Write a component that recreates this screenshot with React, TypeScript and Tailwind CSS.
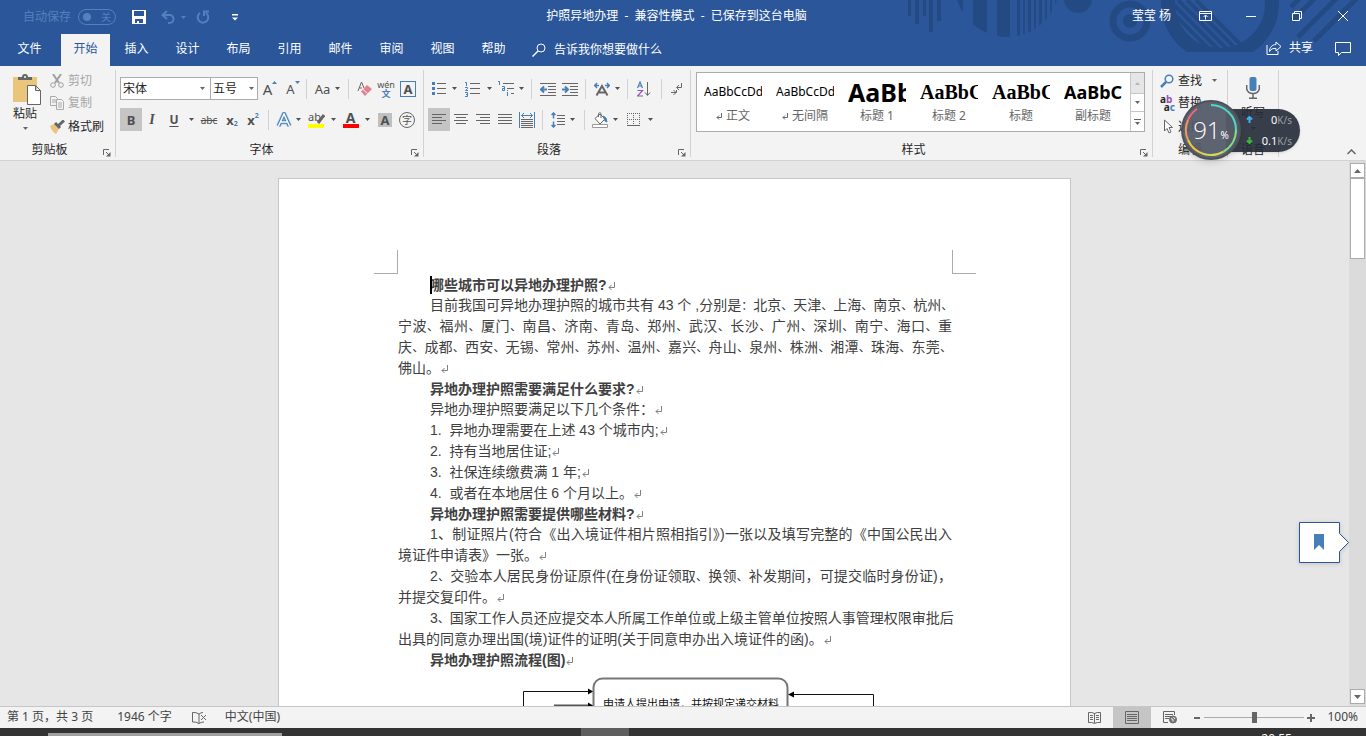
import React from 'react';

type IconProps = {
  w?: number;
  h?: number;
  className?: string;
  children: React.ReactNode;
};

const Icon = ({ w = 16, h = 16, className = '', children }: IconProps) => (
  <svg
    width={w}
    height={h}
    viewBox={`0 0 ${w} ${h}`}
    fill="none"
    stroke="#666"
    className={`shrink-0 ${className}`}
    aria-hidden="true"
  >
    {children}
  </svg>
);

const Caret = ({ className = '' }: { className?: string }) => (
  <Icon w={5} h={3} className={className}>
    <path d="M0 0h5L2.5 3z" fill="currentColor" stroke="none" />
  </Icon>
);

const Tool = ({
  label,
  className,
  children,
}: {
  label: string;
  className: string;
  children: React.ReactNode;
}) => (
  <button
    aria-label={label}
    className={`flex h-[23px] shrink-0 items-center justify-center text-[#505050] ${className}`}
  >
    {children}
  </button>
);

const Drop = ({ className = 'w-[9px]' }: { className?: string }) => (
  <Tool label="更多" className={className}>
    <Caret />
  </Tool>
);

const Sep = ({ className = 'mx-1' }: { className?: string }) => (
  <span className={`h-5 w-px shrink-0 bg-[#d2d2d2] ${className}`} />
);

const Group = ({
  label,
  launcher = false,
  className,
  children,
}: {
  label: string;
  launcher?: boolean;
  className: string;
  children: React.ReactNode;
}) => (
  <section className={`flex h-[87px] shrink-0 flex-col border-r border-[#d2d2d2] ${className}`}>
    <div className="h-[72px]">{children}</div>
    <div className={`relative flex h-[15px] items-center justify-center ${launcher ? 'pr-4' : ''}`}>
      <span>{label}</span>
      {launcher && (
        <button aria-label={`${label}设置`} className="absolute right-1 bottom-0">
          <Icon w={8} h={8}>
            <path d="M.5 6V.5H6M3 3l3 3" />
            <path d="M7.500 3v4.500H3z" fill="#666" stroke="none" />
          </Icon>
        </button>
      )}
    </div>
  </section>
);

const TitlePattern = () => (
  <svg
    width="460"
    height="66"
    viewBox="906 0 460 66"
    className="pointer-events-none absolute top-0 right-0"
    fill="#244a83"
    aria-hidden="true"
  >
    <defs>
      <clipPath id="ball">
        <circle cx="1007" cy="-15" r="52" />
      </clipPath>
      <clipPath id="hoop">
        <rect x="1150" y="0" width="140" height="52" />
      </clipPath>
      <clipPath id="hoopInner">
        <circle cx="1220" cy="3" r="46" />
      </clipPath>
    </defs>
    <path d="M908 0h3v16h-3zM915 0h4v24h-4zM923 0h3v16h-3zM929 0h4v32h-4zM937 0h4v21h-4z" />
    <g clipPath="url(#ball)">
      <path d="M950 0h13v40h-13zM973 0h14v40h-14zM997 0h13v40h-13zM1017 0h3v40h-3zM1023 0h2v40h-2zM1028 0h3v40h-3zM1034 0h2v40h-2zM1039 0h3v40h-3zM1045 0h2v40h-2zM1050 0h2v40h-2zM1055 0h2v40h-2z" />
    </g>
    <circle cx="1078" cy="-1" r="14" />
    <circle cx="1130" cy="21" r="17" fill="none" stroke="#244a83" strokeWidth="7" />
    <circle cx="1130" cy="21" r="7" />
    <g clipPath="url(#hoop)">
      <circle cx="1220" cy="3" r="52" fill="none" stroke="#244a83" strokeWidth="14" />
      <g clipPath="url(#hoopInner)" stroke="#244a83" strokeWidth="4">
        <path d="M1160 0l54 54M1169 0l54 54M1178 0l54 54M1187 0l54 54M1196 0l54 54" />
      </g>
    </g>
    <g stroke="#244a83" strokeWidth="5">
      <path d="M1291 7l12-12M1292 21l26-26M1298 37l42-42M1314 41l46-46" />
    </g>
  </svg>
);

const TitleBar = () => (
  <div className="relative flex h-[34px] items-center pb-0.5 text-white">
    <div className="flex w-[240px] shrink-0 items-center pt-0.5 pl-[23px]">
      <span className="text-[#5580bd]">自动保存</span>
      <button
        aria-label="自动保存 关"
        className="ml-[7px] flex h-4 w-[38px] items-center justify-between rounded-full border border-[#5580bd] px-1 text-[10px] text-[#5580bd]"
      >
        <span className="size-2 rounded-full bg-[#5580bd]" />
        <span>关</span>
      </button>
      <button aria-label="保存" className="ml-4">
        <Icon w={14} h={14}>
          <path
            fillRule="evenodd"
            d="M0 0h14v14H0zM2 1v5h10V1zM3 9v4h2v-2h2v2h4V9z"
            fill="#fff"
            stroke="none"
          />
        </Icon>
      </button>
      <button aria-label="撤消" className="ml-[15px] text-[#5580bd]">
        <Icon w={14} h={14}>
          <path d="M6 1L1.500 5 6 9M2 5h6.500a4 4 0 0 1 0 8H7" stroke="currentColor" strokeWidth="2" />
        </Icon>
      </button>
      <Caret className="ml-1.5 text-[#5580bd]" />
      <button aria-label="重做" className="ml-2.5 text-[#5580bd]">
        <Icon w={14} h={14}>
          <path d="M4 3a5.300 5.300 0 1 0 6 0M8 6V1.500h5" stroke="currentColor" strokeWidth="2" />
        </Icon>
      </button>
      <button aria-label="自定义快速访问工具栏" className="ml-[22px]">
        <Icon w={6} h={7}>
          <path d="M0 0h6v1.500H0zM0 3.500h6L3 6.500z" fill="#fff" stroke="none" />
        </Icon>
      </button>
    </div>
    <h1 className="flex-1 text-center whitespace-pre">
      护照异地办理  -  兼容性模式  -  已保存到这台电脑
    </h1>
    <div className="flex w-[253px] shrink-0 items-center justify-end">
      <span className="pr-[11px]">莹莹 杨</span>
      <button aria-label="功能区显示选项" className="flex w-[46px] justify-center">
        <Icon w={13} h={10}>
          <path d="M.5.5h12v9H.5zM.5 2.500h12M6.500 8.500v-4M4.500 6l2-2 2 2" stroke="#fff" />
        </Icon>
      </button>
      <button aria-label="最小化" className="flex w-[46px] justify-center">
        <Icon w={10} h={10}>
          <path d="M0 5.500h10" stroke="#fff" />
        </Icon>
      </button>
      <button aria-label="向下还原" className="flex w-[46px] justify-center">
        <Icon w={10} h={10}>
          <path d="M.5 2.500h7v7h-7zM2.500 2.500v-2h7v7h-2" stroke="#fff" />
        </Icon>
      </button>
      <button aria-label="关闭" className="flex w-[46px] justify-center">
        <Icon w={10} h={10}>
          <path d="M0 0l10 10M10 0L0 10" stroke="#fff" />
        </Icon>
      </button>
    </div>
  </div>
);

const tabs = ['开始', '插入', '设计', '布局', '引用', '邮件', '审阅', '视图', '帮助'];

const TabBar = () => (
  <nav className="relative flex h-8 items-center text-white">
    <button className="h-8 w-[59px] pb-0.5">文件</button>
    {tabs.map((tab, i) => (
      <button
        key={tab}
        className={`mx-px h-8 w-[49px] pb-0.5 ${i === 0 ? 'ml-0.5 bg-[#f3f3f3] text-[#2b579a]' : ''}`}
      >
        {tab}
      </button>
    ))}
    <button className="ml-[13px] flex items-center gap-2">
      <Icon w={14} h={14}>
        <circle cx="9" cy="5" r="4" stroke="#fff" />
        <path d="M6 8l-5.500 5.500" stroke="#fff" strokeWidth="1.500" />
      </Icon>
      告诉我你想要做什么
    </button>
    <button className="ml-auto flex items-center gap-[7px] pb-1">
      <Icon w={16} h={14}>
        <path d="M1 4v9.500h11V10" stroke="#fff" />
        <path d="M10 1l5 4.500L10 10V7.500C7 7 5 8 3.500 10.500 3.500 6.500 6 3.700 10 3.500z" stroke="#fff" />
      </Icon>
      共享
    </button>
    <button aria-label="批注" className="mr-[15px] ml-[22px] pb-1">
      <Icon w={16} h={15}>
        <path d="M.5 1.500h15v10H6.500l-3 3v-3h-3z" stroke="#fff" />
      </Icon>
    </button>
  </nav>
);

const ClipboardGroup = () => (
  <Group label="剪贴板" launcher className="w-[116px]">
    <div className="flex">
      <button className="flex w-[50px] flex-col items-center pt-1">
        <Icon w={28} h={32} className="ml-1">
          <path d="M0 3h24v25H0z" fill="#ecc57c" stroke="none" />
          <path d="M5 6V3h4a3 3 0 0 1 6 0h4v3z" fill="#666" stroke="none" />
          <circle cx="12" cy="3" r="1" fill="#fff" stroke="none" />
          <path d="M14.500 11.500h8l5 5v14h-13zM22.500 11.500v5h5" fill="#fff" />
        </Icon>
        <span className="leading-[15px]">粘贴</span>
        <Caret className="mt-1.5 text-[#666]" />
      </button>
      <div className="flex flex-col text-[#a6a6a6]">
        <button className="flex h-[21px] items-center gap-1">
          <Icon w={14} h={14}>
            <path d="M3 0l6 9M11 0L5 9" stroke="#a0a0a0" strokeWidth="2" />
            <circle cx="3" cy="11" r="2.300" stroke="#a0a0a0" />
            <circle cx="11" cy="11" r="2.300" stroke="#a0a0a0" />
          </Icon>
          剪切
        </button>
        <button className="flex h-6 items-center gap-1">
          <Icon w={14} h={14}>
            <path d="M.5.500h5l2 2v7h-7zM2 4h4M2 6h4" stroke="#aaa" />
            <path d="M6.500 3.500h5l2 2v8h-7zM8 7h4M8 9h4M8 11h4" stroke="#aaa" fill="#f3f3f3" />
          </Icon>
          复制
        </button>
        <button className="flex h-[23px] items-center gap-[3px] text-[#262626]">
          <Icon w={15} h={14}>
            <path d="M0 6l4-2 5 5-3 5c-2-1-5-4-6-8z" fill="#ecc57c" stroke="none" />
            <path d="M5 3l5 5M8.500 5.500L14 .5" strokeWidth="3" />
          </Icon>
          格式刷
        </button>
      </div>
    </div>
  </Group>
);

const FontGroup = () => (
  <Group label="字体" launcher className="w-[308px]">
    <div className="flex flex-col gap-2 pt-[7px] pl-1">
      <div className="flex items-center">
        <label className="relative">
          <select
            aria-label="字体"
            className="block h-[23px] w-[91px] appearance-none border border-[#ababab] bg-white px-0.5"
          >
            <option>宋体</option>
          </select>
          <Caret className="pointer-events-none absolute top-2.5 right-1.5 text-[#666]" />
        </label>
        <label className="relative -ml-px">
          <select
            aria-label="字号"
            className="block h-[23px] w-[48px] appearance-none border border-[#ababab] bg-white px-0.5"
          >
            <option>五号</option>
          </select>
          <Caret className="pointer-events-none absolute top-2.5 right-1 text-[#666]" />
        </label>
        <Tool label="增大字号" className="w-6">
          <span className="text-[15px]">A</span>
          <Icon w={5} h={3} className="-mt-3">
            <path d="M0 3h5L2.500 0z" fill="#4780b8" stroke="none" />
          </Icon>
        </Tool>
        <Tool label="减小字号" className="w-[22px]">
          <span className="text-[13px]">A</span>
          <Icon w={5} h={3} className="-mt-3">
            <path d="M0 0h5L2.500 3z" fill="#4780b8" stroke="none" />
          </Icon>
        </Tool>
        <Sep className="mr-1 ml-0.5" />
        <Tool label="更改大小写" className="w-[23px]">
          <span className="text-[13px]">Aa</span>
        </Tool>
        <Drop className="w-1.5" />
        <Sep className="mr-1 ml-2" />
        <Tool label="清除所有格式" className="w-[22px]">
          <Icon w={15} h={15}>
            <path d="M1 10L4.500 1 7 7M2.500 7H5" />
            <path d="M10 4l5 4-7 7-4-4.500z" fill="#e6808f" stroke="none" />
            <path d="M6 8.500l4.500 4" stroke="#f3f3f3" />
          </Icon>
        </Tool>
        <Tool label="拼音指南" className="w-[22px] flex-col">
          <span className="text-[9px] leading-[9px]">wén</span>
          <span className="text-[9px] leading-[9px] font-bold text-[#4780b8]">文</span>
        </Tool>
        <Tool label="字符边框" className="w-[22px]">
          <span className="flex size-4 items-center justify-center border border-[#4780b8] text-[13px] font-bold">
            A
          </span>
        </Tool>
      </div>
      <div className="flex items-center">
        <Tool label="加粗" className="w-[22px] bg-[#c5c5c5] text-[13px] font-bold">
          B
        </Tool>
        <Tool label="倾斜" className="w-5 font-['Liberation_Serif',serif] text-[14px] font-bold italic">
          I
        </Tool>
        <Tool label="下划线" className="w-6 text-[12px] font-bold underline underline-offset-2">
          U
        </Tool>
        <Drop className="w-2.5" />
        <Tool label="删除线" className="w-[26px] text-[10px] line-through">
          abc
        </Tool>
        <Tool label="下标" className="w-5 text-[13px] font-bold">
          x<span className="mt-2 text-[7px] text-[#4780b8]">2</span>
        </Tool>
        <Tool label="上标" className="w-[22px] text-[13px] font-bold">
          x<span className="mb-2 text-[7px] text-[#4780b8]">2</span>
        </Tool>
        <Sep />
        <Tool label="文本效果" className="w-[21px]">
          <Icon w={16} h={16}>
            <path d="M2.500 14L8 2l5.500 12M4.500 10h7" stroke="#a9c8e8" strokeWidth="5" />
            <path d="M2.500 14L8 2l5.500 12M4.500 10h7" stroke="#4780b8" strokeWidth="3.500" />
            <path d="M2.500 14L8 2l5.500 12M4.500 10h7" stroke="#fff" strokeWidth="1.500" />
          </Icon>
        </Tool>
        <Drop />
        <Tool label="突出显示" className="w-[26px]">
          <span className="relative h-4 w-4 border-b-4 border-[#ff0] text-left text-[11px] leading-[10px]">
            ab
            <Icon w={8} h={10} className="absolute top-0.5 -right-px">
              <path d="M1 9l6-8" strokeWidth="3" />
            </Icon>
          </span>
        </Tool>
        <Drop />
        <Tool label="字体颜色" className="w-[25px]">
          <span className="h-4 w-4 border-b-4 border-[#f00] text-center text-[14px] leading-[12px] font-bold">
            A
          </span>
        </Tool>
        <Drop />
        <Tool label="字符底纹" className="w-[26px]">
          <span className="flex size-3.5 items-center justify-center bg-[#bfbfbf] text-[13px] font-bold">
            A
          </span>
        </Tool>
        <Tool label="带圈字符" className="w-[18px]">
          <span className="flex size-4 shrink-0 items-center justify-center rounded-full border border-[#666] text-[10px]">
            字
          </span>
        </Tool>
      </div>
    </div>
  </Group>
);

const ParagraphGroup = () => (
  <Group label="段落" launcher className="w-[267px]">
    <div className="flex flex-col gap-2 pt-[7px] pl-1">
      <div className="flex items-center">
        <Tool label="项目符号" className="w-[22px]">
          <Icon w={14} h={15}>
            <path d="M5 2.500h9M5 7.500h9M5 12.500h9" />
            <path d="M0 1h3v3H0zM0 6h3v3H0zM0 11h3v3H0z" fill="#4780b8" stroke="none" />
          </Icon>
        </Tool>
        <Drop />
        <Tool label="编号" className="w-[27px]">
          <Icon w={15} h={16}>
            <path d="M5 2.500h10M5 7.500h10M5 12.500h10" />
            <path d="M0 1.500h1.500V5M0 6.500h2.500v1L.5 9.500h2.500M0 11.500h2.500v4H0M1 13.500h1.500" stroke="#4780b8" />
          </Icon>
        </Tool>
        <Drop className="w-1.5" />
        <Tool label="多级列表" className="w-[27px]">
          <Icon w={16} h={16}>
            <path d="M5 2.500h11M9 7.500h7M13 12.500h3" />
            <path d="M0 .5h1.500V4M4 5.500h2.500v4H4.500v-2H6M9.500 11v4M9.500 9v1" stroke="#4780b8" />
          </Icon>
        </Tool>
        <Drop className="w-1" />
        <Sep className="mr-[5px] ml-2" />
        <Tool label="减少缩进量" className="w-[22px]">
          <Icon>
            <path d="M0 2.500h16M8 5.500h8M8 8.500h8M8 11.500h8M0 14.500h16" />
            <path d="M1 8.500h6M4 5.500l-3 3 3 3" stroke="#4780b8" strokeWidth="2" />
          </Icon>
        </Tool>
        <Tool label="增加缩进量" className="w-[22px]">
          <Icon>
            <path d="M0 2.500h16M8 5.500h8M8 8.500h8M8 11.500h8M0 14.500h16" />
            <path d="M0 8.500h6M3 5.500l3 3-3 3" stroke="#4780b8" strokeWidth="2" />
          </Icon>
        </Tool>
        <Sep />
        <Tool label="中文版式" className="w-6">
          <Icon>
            <path d="M2.500 14.500L8 5l5.500 9.500M5 11.500h6" strokeWidth="2" />
            <path d="M0 4.500h5M3 2L.7 4.500 3 7M11 4.500h5M13 2l2.300 2.500L13 7" stroke="#4780b8" strokeWidth="1.500" />
          </Icon>
        </Tool>
        <Drop className="w-1.5" />
        <Sep className="mr-1 ml-[7px]" />
        <Tool label="排序" className="w-6">
          <Icon w={14} h={16}>
            <path d="M.5 7L3 1l2.500 6M1.500 5h3" stroke="#4780b8" strokeWidth="1.200" />
            <path d="M.5 9.500h5l-5 5.500h5.500" stroke="#9254b5" strokeWidth="1.200" />
            <path d="M10.500 1v13M8 11.500l2.500 3 2.500-3" />
          </Icon>
        </Tool>
        <Sep className="mr-1 ml-[5px]" />
        <Tool label="显示编辑标记" className="w-[22px]">
          <Icon w={12} h={14}>
            <path d="M10.500 1v4.500H6M8 3L5.500 5.500 8 8M5.500 8v2.500H0M2.500 8L5 10.500 2.500 13" />
          </Icon>
        </Tool>
      </div>
      <div className="flex items-center">
        <Tool label="左对齐" className="w-[22px] bg-[#c5c5c5]">
          <Icon w={14} h={13}>
            <path d="M0 1.500h14M0 4.500h10M0 7.500h14M0 10.500h10" />
          </Icon>
        </Tool>
        <Tool label="居中" className="w-[22px]">
          <Icon w={14} h={13}>
            <path d="M0 1.500h14M2 4.500h10M0 7.500h14M2 10.500h10" />
          </Icon>
        </Tool>
        <Tool label="右对齐" className="w-[22px]">
          <Icon w={14} h={13}>
            <path d="M0 1.500h14M4 4.500h10M0 7.500h14M4 10.500h10" />
          </Icon>
        </Tool>
        <Tool label="两端对齐" className="w-[22px]">
          <Icon w={14} h={13}>
            <path d="M0 1.500h14M0 4.500h14M0 7.500h14M0 10.500h14" />
          </Icon>
        </Tool>
        <Tool label="分散对齐" className="w-[22px]">
          <Icon>
            <path d="M2 7.500h12M2 9.500h12M2 11.500h12M2 13.500h12M2 15.500h12" />
            <path d="M.5 0v16M15.500 0v16M2.500 3.500h11M5 1L2.500 3.500 5 6M11 1l2.500 2.500L11 6" stroke="#4780b8" />
          </Icon>
        </Tool>
        <Sep />
        <Tool label="行和段落间距" className="w-[22px]">
          <Icon w={14} h={16}>
            <path d="M6 3.500h8M6 6.500h8M6 9.500h8M6 12.500h8" />
            <path d="M2.500 1v5.500M.5 3l2-2 2 2M2.500 9.500V15M.5 13l2 2 2-2" stroke="#4780b8" strokeWidth="1.500" />
          </Icon>
        </Tool>
        <Drop className="w-1.5" />
        <Sep className="mr-1 ml-[9px]" />
        <Tool label="底纹" className="w-[22px]">
          <Icon>
            <path d="M3 6.500l5-4.500 5 5-5 5zM6.500 5V1.500q1.500-2 2.500 0V6" fill="#fff" />
            <path d="M11 4q4 1 4 6l-2-1z" fill="#4780b8" stroke="#4780b8" />
            <path d="M.5 12.500h15v3H.5z" fill="#fff" stroke="#999" />
          </Icon>
        </Tool>
        <Drop />
        <Tool label="边框" className="w-[26px]">
          <Icon w={13} h={13}>
            <path d="M0 .5h13M0 6.500h13M.5 0v12M6.500 0v12M12.500 0v12" strokeDasharray="1 1" />
            <path d="M0 12.500h13" />
          </Icon>
        </Tool>
        <Drop />
      </div>
    </div>
  </Group>
);

const styles = [
  { name: '正文', sample: 'AaBbCcDd', look: 'text-[12px]', mark: true },
  { name: '无间隔', sample: 'AaBbCcDd', look: 'text-[12px]', mark: true },
  { name: '标题 1', sample: 'AaBb', look: 'text-[25px] font-bold', mark: false },
  { name: '标题 2', sample: 'AaBbC', look: "font-['Liberation_Serif',serif] text-[20px] font-bold", mark: false },
  { name: '标题', sample: 'AaBbC', look: "font-['Liberation_Serif',serif] text-[20px] font-bold", mark: false },
  { name: '副标题', sample: 'AaBbCc', look: 'text-[18px] font-bold', mark: false },
];

const StylesGroup = () => (
  <Group label="样式" launcher className="w-[462px]">
    <div className="pt-0.5 pl-[5px]">
      <div className="flex h-[60px] w-[449px] border border-[#ababab] bg-white">
        <div className="flex flex-1">
          {styles.map((s) => (
            <button key={s.name} className="flex w-[72px] flex-col px-[7px] pt-[3px]">
              <span
                className={`block h-8 w-[58px] overflow-hidden text-left leading-8 whitespace-nowrap text-black ${s.look}`}
              >
                {s.sample}
              </span>
              <span className="flex w-full items-center justify-center gap-1 text-[#666]">
                {s.mark && (
                  <Icon w={6} h={7}>
                    <path d="M5.500 0v4.500H1M3 2.500L1 4.500l2 2" />
                  </Icon>
                )}
                {s.name}
              </span>
            </button>
          ))}
        </div>
        <div className="flex w-[14px] flex-col border-l border-[#c6c6c6]">
          <button aria-label="上一行" className="flex h-5 items-center justify-center bg-[#e6e6e6] text-[#b5b5b5]">
            <Caret className="rotate-180" />
          </button>
          <button
            aria-label="下一行"
            className="flex h-[19px] items-center justify-center border-y border-[#c6c6c6] text-[#666]"
          >
            <Caret />
          </button>
          <button
            aria-label="其他样式"
            className="flex flex-1 flex-col items-center justify-center gap-0.5 text-[#666]"
          >
            <span className="h-px w-[7px] bg-[#666]" />
            <Caret />
          </button>
        </div>
      </div>
    </div>
  </Group>
);

const EditGroups = () => (
  <>
    <Group label="编辑" className="w-[75px]">
      <div className="flex flex-col pl-[7px]">
        <button className="flex h-[21px] items-center gap-1">
          <Icon w={14} h={14}>
            <circle cx="9" cy="5" r="3.800" stroke="#4780b8" strokeWidth="1.500" />
            <path d="M6 8l-5 5" stroke="#4780b8" strokeWidth="2.500" />
          </Icon>
          查找
          <Caret className="ml-1.5 text-[#666]" />
        </button>
        <button className="flex h-6 items-center gap-[3px]">
          <span className="flex w-[15px] flex-col text-[10px] leading-[8px] font-bold">
            <span className="text-left">
              a<span className="text-[#9254b5]">b</span>
            </span>
            <span className="text-right">
              a<span className="text-[#4780b8]">c</span>
            </span>
          </span>
          替换
        </button>
        <button className="flex h-[23px] items-center gap-1">
          <Icon w={14} h={15}>
            <path d="M4.500 1v11l2.500-2.500 2 4.500 2-1-2-4.500h3.500z" fill="#fff" />
          </Icon>
          选择
          <Caret className="ml-1.5 text-[#666]" />
        </button>
      </div>
    </Group>
    <Group label="语音" className="w-[51px]">
      <button className="flex w-full flex-col items-center pt-[7px]">
        <Icon w={14} h={22}>
          <rect x="3.500" y="0" width="7" height="14" rx="2" fill="#4780b8" stroke="none" />
          <path d="M.7 8v4q1 4.500 6.300 4.500t6.300-4.500V8M7 17v4M3 21.300h8" strokeWidth="1.500" />
        </Icon>
        <span className="mt-1.5">听写</span>
        <Caret className="mt-1.5 text-[#666]" />
      </button>
    </Group>
  </>
);

const NetMonitor = () => (
  <aside className="absolute top-[100px] right-[66px] flex h-[60px] w-[119px] items-center">
    <div className="ml-auto flex h-[43px] w-[74px] flex-col justify-center rounded-r-full bg-[#242a36]/90 pr-2 pl-5 text-white shadow">
      <div className="flex h-[21px] items-center text-[11px]">
        <Icon w={7} h={7}>
          <path d="M3.500 7V1M1 3.500L3.500 1 6 3.500" stroke="#3fb0f0" strokeWidth="2" />
        </Icon>
        <span className="ml-auto">0</span>
        <span className="text-[10px] text-[#9a9da5]">K/s</span>
      </div>
      <div className="flex h-[21px] items-center text-[11px]">
        <Icon w={7} h={7}>
          <path d="M3.500 0v6M1 3.500L3.500 6 6 3.500" stroke="#38b838" strokeWidth="2" />
        </Icon>
        <span className="ml-auto">0.1</span>
        <span className="text-[10px] text-[#9a9da5]">K/s</span>
      </div>
    </div>
    <div className="absolute left-0 flex size-[60px] items-center justify-center rounded-full border-2 border-[#4d5159] bg-[#555b69]/95 text-white shadow-md">
      <svg width="56" height="56" viewBox="0 0 56 56" fill="none" strokeWidth="2" className="absolute">
        <path d="M28 3a25 25 0 0 1 25 25" stroke="#4fd8c4" />
        <path d="M53 28a25 25 0 0 1-12.500 21.600" stroke="#83dd84" />
        <path d="M40.500 49.600A25 25 0 0 1 20 51.700" stroke="#cfdc58" />
        <path d="M20 51.700A25 25 0 0 1 5 38" stroke="#efc83c" />
        <path d="M5 38A25 25 0 0 1 5 18" stroke="#f0985a" />
        <path d="M5 18A25 25 0 0 1 14 7" stroke="#ef6676" />
      </svg>
      <span className="font-['Open_Sans',sans-serif] text-[24px] leading-none font-light">91</span>
      <span className="mt-2.5 text-[10px] leading-none">%</span>
    </div>
  </aside>
);

const Return = () => (
  <Icon w={8} h={8} className="ml-px inline-block align-baseline">
    <path d="M6.500 0v5.500H1M3.500 3L1 5.500 3.500 8" stroke="#808080" />
  </Icon>
);

type Block = { heading?: boolean; tight?: boolean; lines: string[] };

const blocks: Block[] = [
  { heading: true, lines: ['哪些城市可以异地办理护照?'] },
  {
    tight: true,
    lines: [
      '目前我国可异地办理护照的城市共有 43 个 ,分别是：北京、天津、上海、南京、杭州、',
      '宁波、福州、厦门、南昌、济南、青岛、郑州、武汉、长沙、广州、深圳、南宁、海口、重',
      '庆、成都、西安、无锡、常州、苏州、温州、嘉兴、舟山、泉州、株洲、湘潭、珠海、东莞、',
      '佛山。',
    ],
  },
  { heading: true, lines: ['异地办理护照需要满足什么要求?'] },
  { lines: ['异地办理护照要满足以下几个条件：'] },
  { lines: ['1.  异地办理需要在上述 43 个城市内;'] },
  { lines: ['2.  持有当地居住证;'] },
  { lines: ['3.  社保连续缴费满 1 年;'] },
  { lines: ['4.  或者在本地居住 6 个月以上。'] },
  { heading: true, lines: ['异地办理护照需要提供哪些材料?'] },
  {
    lines: [
      '1、制证照片(符合《出入境证件相片照相指引》)一张以及填写完整的《中国公民出入',
      '境证件申请表》一张。',
    ],
  },
  {
    tight: true,
    lines: [
      '2、交验本人居民身份证原件(在身份证领取、换领、补发期间，可提交临时身份证)，',
      '并提交复印件。',
    ],
  },
  {
    tight: true,
    lines: [
      '3、国家工作人员还应提交本人所属工作单位或上级主管单位按照人事管理权限审批后',
      '出具的同意办理出国(境)证件的证明(关于同意申办出入境证件的函)。',
    ],
  },
  { heading: true, lines: ['异地办理护照流程(图)'] },
];

const Line = ({ text, tight }: { text: string; tight?: boolean }) =>
  tight ? (
    <>
      {text.split(/([、：])/).map((part, i) =>
        i % 2 ? (
          <span key={i} className="text-[12px] leading-none">
            {part}
          </span>
        ) : (
          part
        ),
      )}
    </>
  ) : (
    <>{text}</>
  );

const FlowChart = () => (
  <svg width="360" height="60" viewBox="518 670 360 60" className="ml-[120px] block" fill="none">
    <rect x="593.500" y="678.500" width="194" height="60" rx="9" stroke="#777" strokeWidth="2" />
    <path d="M523.500 730v-38.500H588M873.500 730v-35.500H793" stroke="#111" />
    <path d="M554 705.500h34" stroke="#555" strokeWidth="2" />
    <path d="M593 691.500l-5-3v6zM593 705.500l-5-3v6zM788 694.500l6-3v6z" fill="#000" />
    <text x="603" y="708" fontSize="11" fill="#111">
      申请人提出申请，并按规定递交材料
    </text>
  </svg>
);

const Page = () => (
  <article className="mx-auto mt-[17px] h-[900px] w-[793px] border border-[#c6c6c6] bg-white pt-[71px] font-['Liberation_Sans','Noto_Sans_CJK_SC',sans-serif] text-[14px] text-[#404040]">
    <div className="mb-px flex justify-between pr-[94px] pl-[95px]">
      <span className="size-6 border-r border-b border-[#ababab]" />
      <span className="size-6 border-b border-l border-[#ababab]" />
    </div>
    <div className="mr-[118px] ml-[119px]">
      {blocks.map((block, i) => {
        const last = block.lines.length - 1;
        const Tag = block.heading ? 'h2' : 'p';
        return (
          <Tag
            key={i}
            className={block.heading ? 'indent-8 leading-[20px] font-bold' : 'indent-8 leading-[21px]'}
          >
            {block.lines.map((line, n) => (
              <span
                key={n}
                className={`block ${n > 0 ? 'indent-0' : ''} ${
                  n < last ? 'whitespace-nowrap [text-align-last:justify]' : 'whitespace-pre'
                } ${i === 0 ? 'relative' : ''}`}
              >
                {i === 0 && <span className="absolute top-px left-8 h-[18px] w-0.5 bg-black" />}
                <Line text={line} tight={block.tight} />
                {n === last && <Return />}
              </span>
            ))}
          </Tag>
        );
      })}
      <FlowChart />
    </div>
  </article>
);

const ScrollBar = () => (
  <div className="flex w-[17px] shrink-0 flex-col items-center bg-[#dbdbdb] py-0.5">
    <button
      aria-label="向上滚动"
      className="flex h-[15px] w-[15px] items-center justify-center border border-[#ababab] bg-white text-[#666]"
    >
      <Icon w={7} h={4}>
        <path d="M0 4h7L3.500 0z" fill="#666" stroke="none" />
      </Icon>
    </button>
    <div className="h-[81px] w-[15px] border border-[#ababab] bg-white" />
    <button
      aria-label="向下滚动"
      className="mt-auto flex h-[15px] w-[15px] items-center justify-center border border-[#ababab] bg-white text-[#666]"
    >
      <Icon w={7} h={4}>
        <path d="M0 0h7L3.500 4z" fill="#666" stroke="none" />
      </Icon>
    </button>
  </div>
);

const StatusBar = () => (
  <footer className="flex h-[22px] shrink-0 items-center border-t border-[#c6c6c6] bg-[#f3f3f3] text-[#444]">
    <span className="ml-[7px] pb-0.5">第 1 页，共 3 页</span>
    <span className="ml-6 pb-0.5">1946 个字</span>
    <button aria-label="校对" className="ml-5">
      <Icon w={15} h={12}>
        <path d="M7 2Q4 0 .5.500v9.500Q4 9.500 7 11.500zM7 2q2-1.500 4-1.500M7 11.500q2-1.500 5-1.500" />
        <path d="M9 3l5 5M14 3L9 8" />
      </Icon>
    </button>
    <button className="ml-[18px] pb-0.5">中文(中国)</button>
    <div className="ml-auto flex h-full items-center">
      <button aria-label="阅读视图" className="flex h-full w-[38px] items-center justify-center">
        <Icon w={13} h={12}>
          <path d="M6.500 1.500Q4 0 .5.500v10q3.500-.5 6 1 2.500-1.500 6-1V.5q-3.500-.5-6 1zM6.500 1v10M2 3.500h3M2 5.500h3M2 7.500h3M8 3.500h3M8 5.500h3M8 7.500h3" />
        </Icon>
      </button>
      <button aria-label="页面视图" className="flex h-full w-[38px] items-center justify-center bg-[#c5c5c5]">
        <Icon w={14} h={13}>
          <path d="M.5.500h13v12H.5zM2 3.500h10M2 5.500h10M2 7.500h10M2 9.500h10" />
        </Icon>
      </button>
      <button aria-label="Web 版式视图" className="flex h-full w-[38px] items-center justify-center">
        <Icon w={14} h={13}>
          <path d="M11.500 4V.5H.5v11H5M2 3.500h8M2 5.500h6M2 7.500h4" />
          <circle cx="10" cy="8.500" r="3.500" fill="#777" />
          <path d="M8 7.500l2 1v2M10.500 6l1.500 2" stroke="#f3f3f3" />
        </Icon>
      </button>
      <button aria-label="缩小" className="ml-1">
        <Icon w={8} h={8}>
          <path d="M1 4h6" strokeWidth="2" />
        </Icon>
      </button>
      <input
        type="range"
        aria-label="显示比例"
        min={0}
        max={100}
        defaultValue={50}
        className="mx-[3px] h-3 w-[100px] appearance-none bg-[linear-gradient(#ababab,#ababab)] bg-[length:100%_1px] bg-center bg-no-repeat [&::-webkit-slider-thumb]:h-[11px] [&::-webkit-slider-thumb]:w-[5px] [&::-webkit-slider-thumb]:appearance-none [&::-webkit-slider-thumb]:bg-[#666]"
      />
      <button aria-label="放大">
        <Icon w={8} h={8}>
          <path d="M0 4h8M4 0v8" strokeWidth="2" />
        </Icon>
      </button>
      <button className="mr-2 ml-[11px] w-8 pb-0.5 text-right">100%</button>
    </div>
  </footer>
);

export default function App() {
  return (
    <div className="relative flex h-screen flex-col overflow-hidden bg-[#e6e6e6] font-['Noto_Sans','Noto_Sans_CJK_SC',sans-serif] text-[12px] leading-4 text-[#262626]">
      <header className="relative shrink-0 bg-[#2b579a]">
        <TitlePattern />
        <TitleBar />
        <TabBar />
      </header>
      <div className="flex shrink-0 border-b border-[#d2d2d2] bg-[#f3f3f3] pt-1 pb-[3px]">
        <ClipboardGroup />
        <FontGroup />
        <ParagraphGroup />
        <StylesGroup />
        <EditGroups />
        <button aria-label="折叠功能区" className="mt-auto mr-[10px] mb-0.5 ml-auto">
          <Icon w={9} h={6}>
            <path d="M.5 5l4-4 4 4" strokeWidth="1.500" />
          </Icon>
        </button>
      </div>
      <main className="relative flex min-h-0 flex-1 overflow-hidden">
        <div className="flex-1 overflow-hidden">
          <Page />
        </div>
        <ScrollBar />
        <button aria-label="书签" className="absolute top-[361px] right-[16px]">
          <svg width="51" height="42" viewBox="0 0 51 42" fill="#fff" stroke="#2b579a" className="drop-shadow-sm">
            <path d="M.5.500h40v11l9 9-9 9v11H.5z" />
            <path d="M15 12h10v16l-5-5-5 5z" fill="#4780b8" stroke="none" />
          </svg>
        </button>
      </main>
      <StatusBar />
      <div className="relative flex h-2 shrink-0 items-end overflow-hidden bg-[#333]">
        <span className="ml-12 h-[3px] w-[234px] bg-[#a0a0a0]" />
        <span className="ml-[299px] h-2 w-12 bg-[#5e5e5e]" />
        <span className="mr-[74px] ml-auto h-[5px] text-white">20:55</span>
      </div>
      <NetMonitor />
    </div>
  );
}
